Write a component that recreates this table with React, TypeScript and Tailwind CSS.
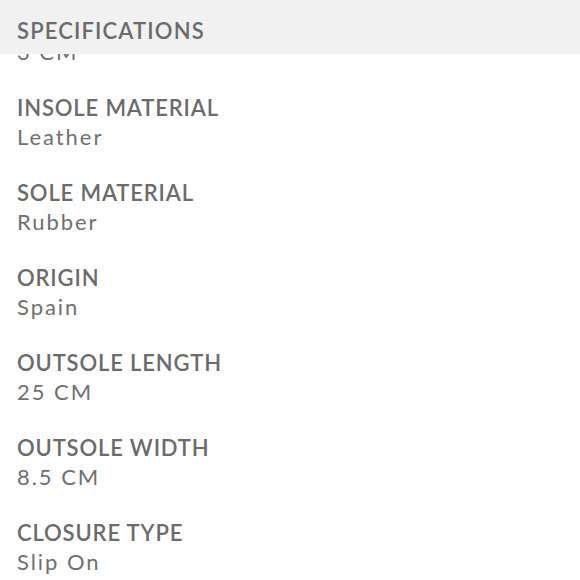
const specs = [
  { label: "HEEL HEIGHT", value: "3 CM" },
  { label: "INSOLE MATERIAL", value: "Leather" },
  { label: "SOLE MATERIAL", value: "Rubber" },
  { label: "ORIGIN", value: "Spain" },
  { label: "OUTSOLE LENGTH", value: "25 CM" },
  { label: "OUTSOLE WIDTH", value: "8.5 CM" },
  { label: "CLOSURE TYPE", value: "Slip On" },
];

export default function App() {
  return (
    <div className="h-[580px] w-[580px] overflow-hidden bg-white font-['Lato',sans-serif]">
      <div className="h-[54px] bg-[#f1f1f1] px-[17px] pt-[19.5px]">
        <h2 className="text-[22px] font-semibold leading-[22px] tracking-[1.15px] text-[#6b6b6b]">
          SPECIFICATIONS
        </h2>
      </div>
      <div className="h-[526px] overflow-hidden px-[17px]">
        <div className="mt-[-44px] flex flex-col gap-[30px]">
          {specs.map((s) => (
            <div key={s.label} className="flex flex-col">
              <div className="text-[22px] font-semibold leading-[26px] tracking-[0.85px] text-[#6b6b6b]">
                {s.label}
              </div>
              <div className="mt-[3px] text-[22px] leading-[26px] tracking-[1.95px] text-[#707070]">
                {s.value}
              </div>
            </div>
          ))}
        </div>
      </div>
    </div>
  );
}
